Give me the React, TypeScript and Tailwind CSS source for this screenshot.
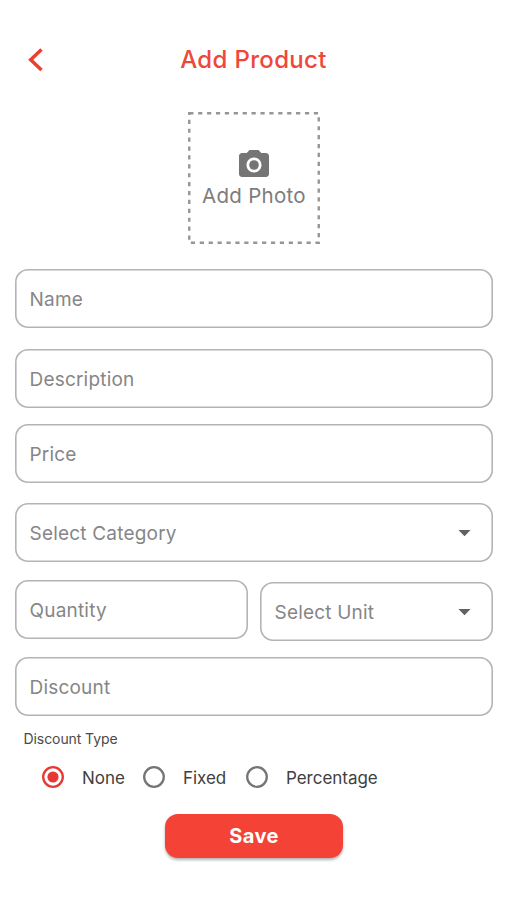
import { useState } from 'react';
import { MdArrowDropDown, MdCameraAlt } from 'react-icons/md';
import clsx from 'clsx';

interface IFieldProps {
  label: string;
  dropdown?: boolean;
  className?: string;
}

const discountTypes = [
  {
    value: 'none',
    label: 'None',
    className: 'w-[101px]',
  },
  {
    value: 'fixed',
    label: 'Fixed',
    className: 'w-[103px]',
  },
  {
    value: 'percentage',
    label: 'Percentage',
    className: '',
  },
];

const Field = ({ label, dropdown, className }: IFieldProps) => {
  return (
    <div
      className={clsx(
        'flex h-[59px] items-center justify-between rounded-[13px] px-[14.5px] text-[19px] leading-6 tracking-[0.2px] text-[#868686] shadow-[inset_0_0_0_1.6px_#b4b4b4]',
        className,
      )}
    >
      <span className="pt-0.5">{label}</span>
      {dropdown && (
        <MdArrowDropDown className="mb-px size-[29px] text-[#616161]" />
      )}
    </div>
  );
};

const Radio = ({ checked }: { checked: boolean }) => {
  return (
    <svg
      viewBox="0 0 22 22"
      className={clsx(
        'size-[22px] shrink-0',
        checked ? 'text-[#e53935]' : 'text-[#757575]',
      )}
      fill="none"
    >
      <circle cx="11" cy="11" r="9.8" stroke="currentColor" strokeWidth="2.3" />
      {checked && <circle cx="11" cy="11" r="5.6" fill="currentColor" />}
    </svg>
  );
};

const App = () => {
  const [discountType, setDiscountType] = useState('none');

  return (
    <div className="flex h-[900px] w-[507px] flex-col bg-white pl-[15px] pr-[14px] pt-10 font-['Inter',sans-serif]">
      <header className="grid h-10 grid-cols-[60px_1fr_61px] items-center">
        <button className="pl-3">
          <svg
            viewBox="0 0 16 24"
            className="h-6 w-4 text-[#e8412f]"
            fill="none"
            stroke="currentColor"
            strokeWidth="3.5"
          >
            <path d="M14.5 1.5 3.7 11.7 14.5 22" />
          </svg>
        </button>
        <h1 className="text-center text-2xl font-medium tracking-[0.34px] text-[#ee483b]">
          Add Product
        </h1>
      </header>

      <button className="relative ml-[173px] mt-8 flex size-[132px] flex-col items-center pt-[35px] text-[#757575]">
        <svg className="absolute inset-0 size-full" fill="none">
          <rect
            x="1.25"
            y="1.25"
            width="129.5"
            height="129.5"
            stroke="#969696"
            strokeWidth="2.4"
            strokeDasharray="4.2 4.7"
          />
        </svg>
        <MdCameraAlt className="size-9" />
        <span className="mt-px text-[20.5px] leading-6 tracking-[0.28px] text-[#7d7d7d]">
          Add Photo
        </span>
      </button>

      <div className="mt-[25px] flex flex-col">
        <Field label="Name" />
        <Field label="Description" className="mt-[21px]" />
        <Field label="Price" className="mt-4" />
        <Field label="Select Category" dropdown className="mt-5" />
        <div className="mt-[18px] grid grid-cols-[233px_233px] gap-3">
          <Field label="Quantity" />
          <Field label="Select Unit" dropdown className="mt-0.5" />
        </div>
        <Field label="Discount" className="mt-4" />
      </div>

      <p className="ml-[8.5px] mt-[13px] text-sm leading-5 tracking-[-0.08px] text-[#4a4a4a]">
        Discount Type
      </p>
      <div className="ml-[26.5px] mt-[17px] flex h-[22px] items-center">
        {discountTypes.map((type) => (
          <button
            key={type.value}
            className={clsx('flex items-center gap-[18.5px]', type.className)}
            onClick={() => setDiscountType(type.value)}
          >
            <Radio checked={discountType === type.value} />
            <span className="pt-px text-[17px] leading-[22px] tracking-[-0.03px] text-[#404040]">
              {type.label}
            </span>
          </button>
        ))}
      </div>

      <button className="ml-[150px] mt-[26px] h-11 w-[178px] rounded-[13px] bg-[#f44336] pb-px text-xl font-bold tracking-[0.4px] text-white shadow-[0_2px_3px_rgba(0,0,0,0.3)]">
        Save
      </button>
    </div>
  );
};

export default App;
